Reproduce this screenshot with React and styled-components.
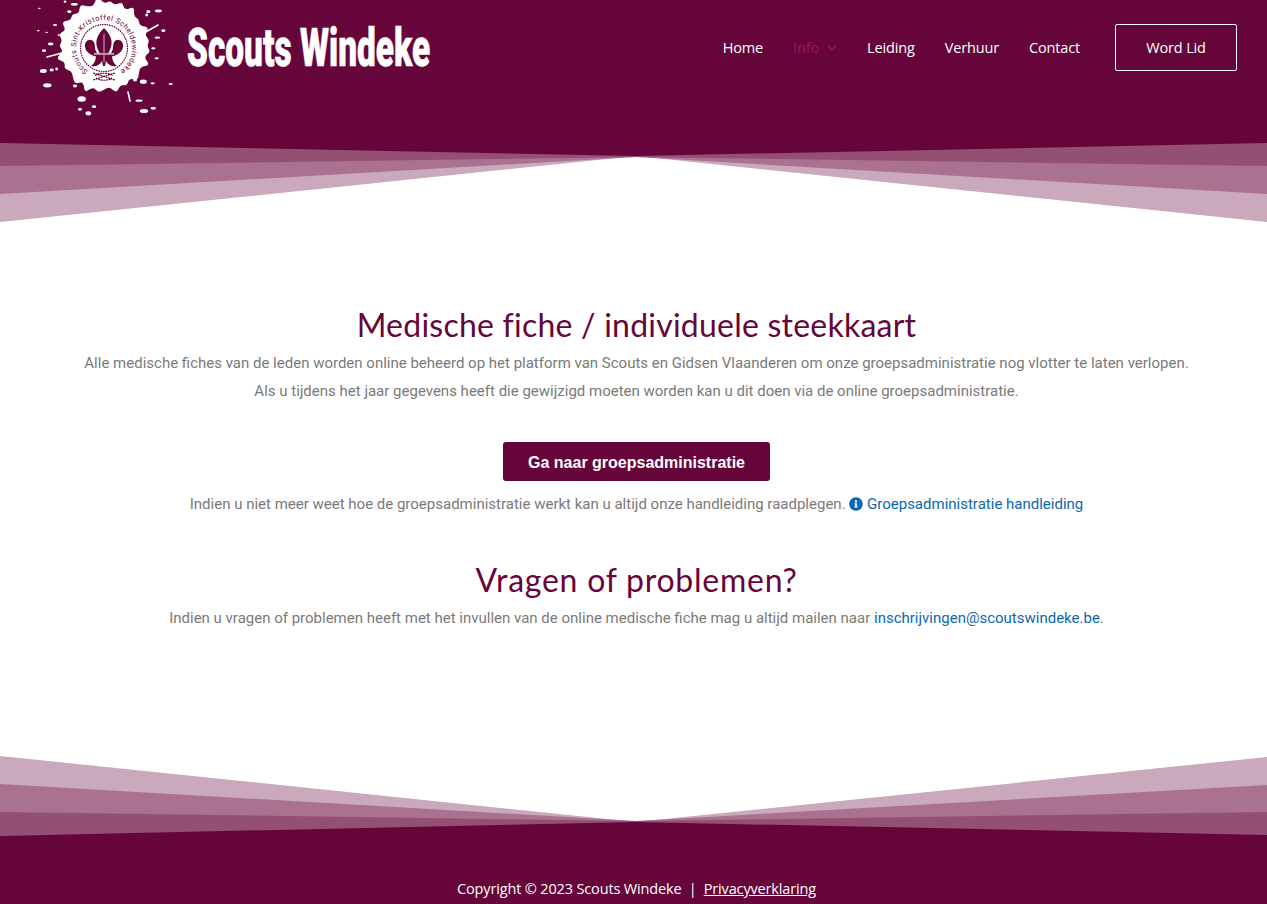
import React from "react";
import styled, { createGlobalStyle } from "styled-components";
import { FaInfoCircle } from "react-icons/fa";

const DARK = "#660539";

const Global = createGlobalStyle`
  html, body { margin: 0; padding: 0; background: #fff; }
  body { font-family: Roboto, "Liberation Sans", sans-serif; }
  * { box-sizing: border-box; }
`;

const Page = styled.div`
  width: 100%;
  height: 904px;
  display: flex;
  flex-direction: column;
  overflow: hidden;
`;

const Header = styled.header`
  height: 143px;
  flex: none;
  background: ${DARK};
  display: flex;
  align-items: flex-start;
  padding: 0 30px 0 36px;
`;

const LogoSvg = styled.svg`
  width: 140px;
  height: 120px;
  flex: none;
  display: block;
`;

const Title = styled.div`
  width: 243px;
  margin: 17px 0 0 11px;
  flex: none;
  color: #fff;
  font-family: Roboto, sans-serif;
  font-weight: 900;
  font-size: 54px;
  line-height: 62px;
  white-space: nowrap;
  transform: scaleX(0.619);
  transform-origin: left center;
  -webkit-text-stroke: 0.6px #fff;
`;

const Nav = styled.nav`
  margin-left: auto;
  margin-top: 24px;
  display: flex;
  align-items: center;
  height: 47px;
  gap: 30px;
`;

const NavLink = styled.a`
  font-family: "Open Sans", sans-serif;
  font-size: 14.5px;
  letter-spacing: -0.15px;
  color: ${(p) => (p.$active ? "#a3125f" : "#fff")};
  display: flex;
  align-items: center;
  gap: 8px;
  white-space: nowrap;
`;

const Cta = styled.a`
  width: 122px;
  height: 47px;
  margin-left: 5px;
  border: 1px solid #fff;
  border-radius: 2px;
  color: #fff;
  font-family: "Open Sans", sans-serif;
  font-size: 14.5px;
  letter-spacing: -0.15px;
  display: flex;
  align-items: center;
  justify-content: center;
`;

const Band = styled.svg`
  display: block;
  flex: none;
  width: 100%;
  height: 80px;
`;

const Main = styled.main`
  height: 533px;
  flex: none;
  padding: 82px 0 0 6px;
  text-align: center;
`;

const Heading = styled.h2`
  margin: ${(p) => (p.$second ? "42px" : "0")} 0 4px;
  font-family: Lato, sans-serif;
  font-weight: 400;
  font-size: 32px;
  line-height: 40px;
  color: ${DARK};
  letter-spacing: ${(p) => (p.$second ? "0.75px" : "0.23px")};
`;

const Text = styled.p`
  margin: 0;
  font-size: 15px;
  line-height: 28px;
  color: #7a7a7a;
`;

const Link = styled.a`
  color: #0b68b0;
`;

const Info = styled(FaInfoCircle)`
  color: #0b68b0;
  width: 14px;
  height: 14px;
  vertical-align: -1.5px;
`;

const Button = styled.a`
  display: block;
  width: 267px;
  height: 39px;
  margin: 37px auto 9px;
  background: ${DARK};
  border-radius: 3px;
  color: #fff;
  font-family: "Liberation Sans", Arial, sans-serif;
  font-weight: 700;
  font-size: 16px;
  line-height: 41px;
`;

const Footer = styled.footer`
  flex: 1;
  background: ${DARK};
  padding: 43px 0 0 6px;
  text-align: center;
  color: #fff;
  font-family: "Open Sans", sans-serif;
  font-size: 14.5px;
  letter-spacing: -0.15px;
  line-height: 20px;
`;

const FooterLink = styled.a`
  color: #fff;
  text-decoration: underline;
`;

const radii = [45,49,43,52,44,46,50,43,48,44,51,43,46,49,44,53,43,50,46,43,48,44,52,43,47,44,49,43,51,44,47,43,50,45,43,53,44,48,44,50,43,52,44,46,43,51,44,48];
const blob = (() => {
  const pts = radii.map((r, i) => {
    const a = (i / radii.length) * Math.PI * 2;
    return [68 + Math.cos(a) * (r - 2), 46 + Math.sin(a) * (r - 2)];
  });
  const mid = (a, b) => [(a[0] + b[0]) / 2, (a[1] + b[1]) / 2];
  const f = (p) => `${p[0].toFixed(1)} ${p[1].toFixed(1)}`;
  let d = `M${f(mid(pts[pts.length - 1], pts[0]))}`;
  pts.forEach((p, i) => {
    d += `Q${f(p)} ${f(mid(p, pts[(i + 1) % pts.length]))}`;
  });
  return d + "Z";
})();

const splats = [
  [163,13,5,2],[135,5,2,1.5],[415,33,5,2],[385,35,3,2],[430,92,3,2],[412,113,4,1.5],[400,145,3,1.5],
  [410,175,3,1.5],[72,152,3,2],[92,132,4,2],[105,75,3,1.5],[120,105,4,1.2],[70,213,5,3],[95,210,3,2],
  [110,207,2,2],[82,256,6,3],[165,258,3,2],[185,297,6,4],[222,320,3,2],[180,328,3,2],[205,340,4,3],
  [357,302,5,1.5],[372,333,6,3],[400,325,4,2],[370,245,5,3],[398,250,3,1.5],[452,252,3,1.5],
  [345,240,3,2],[55,92,2,1],[80,97,2,1],[58,25,2,1],[148,35,3,2],[380,45,2,2],
];

const Logo = () => (
  <LogoSvg viewBox="0 0 140 120" aria-label="Scouts Windeke logo">
    <path d={blob} fill="#fff" />
    {splats.map(([x, y, rx, ry], i) => (
      <ellipse key={i} cx={x / 3 - 16} cy={y / 3} rx={rx * 0.7} ry={ry * 0.7} fill="#fff" />
    ))}
    <path d="M108 33L122 25M11 57L26 53M92 92L94 101" stroke="#fff" strokeWidth="1.6" strokeLinecap="round" />
    <circle cx="68" cy="48" r="23.5" fill="none" stroke={DARK} strokeWidth="1.2" strokeDasharray="1.6 0.8" />
    <defs>
      <path id="logoArc" d="M 52 71 A 28 28 0 1 1 84 71" />
    </defs>
    <text fontFamily="Roboto, sans-serif" fontSize="7.4" fill={DARK}>
      <textPath href="#logoArc" textLength="141" lengthAdjust="spacing">
        Scouts Sint-Kristoffel Scheldewindeke
      </textPath>
    </text>
    <g fill={DARK}>
      <path d="M68 28C62 34 59 40 61 47C62 51 64 53 65 56L71 56C72 53 74 51 75 47C77 40 74 34 68 28Z" />
      <path d="M65 57C59 57 50 54 49 47C48 41 54 38 57 41C60 44 58 48 60 51C61 54 63 55 65 55Z" />
      <path d="M65 57C59 57 50 54 49 47C48 41 54 38 57 41C60 44 58 48 60 51C61 54 63 55 65 55Z" transform="matrix(-1 0 0 1 136 0)" />
      <path d="M60 56H76C76 60 78 64 81 66C76 67 72 65 70 61L69 66H67L66 61C64 65 60 67 55 66C58 64 60 60 60 56Z" />
    </g>
    <rect x="58" y="53" width="20" height="1.8" fill="#c9a2b8" />
    <rect x="67.3" y="34" width="1.4" height="28" fill="#b7839f" />
    <path d="M57 73L79 80M79 73L57 80M59 75.5C63 72.5 73 72.5 77 75.5M60 78C64 81 72 81 76 78" stroke={DARK} strokeWidth="1.2" fill="none" strokeDasharray="2 .6" />
  </LogoSvg>
);

const TopBand = () => (
  <Band viewBox="0 0 1267 80" preserveAspectRatio="none">
    <polygon points="0,0 1267,0 1267,79 636,13 0,79" fill="#caa9bc" />
    <polygon points="0,0 1267,0 1267,51 636,14 0,51" fill="#aa7290" />
    <polygon points="0,0 1267,0 1267,23 636,14 0,23" fill="#945074" />
    <polygon points="0,0 1267,0 636,13" fill={DARK} />
  </Band>
);

const BottomBand = () => (
  <Band viewBox="0 0 1267 80" preserveAspectRatio="none">
    <polygon points="0,0 636,66 1267,1 1267,80 0,80" fill="#caa9bc" />
    <polygon points="0,28 636,65 1267,29 1267,80 0,80" fill="#aa7290" />
    <polygon points="0,56 636,65 1267,56 1267,80 0,80" fill="#945074" />
    <polygon points="0,80 636,66 1267,79 1267,80" fill={DARK} />
  </Band>
);

export default function App() {
  return (
    <Page>
      <Global />
      <Header>
        <Logo />
        <Title>Scouts Windeke</Title>
        <Nav>
          <NavLink>Home</NavLink>
          <NavLink $active>
            Info
            <svg width="10" height="6" viewBox="0 0 10 6" fill="none" stroke="#a3125f" strokeWidth="1.3">
              <path d="M1 1l4 4 4-4" />
            </svg>
          </NavLink>
          <NavLink>Leiding</NavLink>
          <NavLink>Verhuur</NavLink>
          <NavLink>Contact</NavLink>
          <Cta>Word Lid</Cta>
        </Nav>
      </Header>
      <TopBand />
      <Main>
        <Heading>Medische fiche / individuele steekkaart</Heading>
        <Text>Alle medische fiches van de leden worden online beheerd op het platform van Scouts en Gidsen Vlaanderen om onze groepsadministratie nog vlotter te laten verlopen.</Text>
        <Text>Als u tijdens het jaar gegevens heeft die gewijzigd moeten worden kan u dit doen via de online groepsadministratie.</Text>
        <Button>Ga naar groepsadministratie</Button>
        <Text>
          Indien u niet meer weet hoe de groepsadministratie werkt kan u altijd onze handleiding raadplegen. <Info /> <Link>Groepsadministratie handleiding</Link>
        </Text>
        <Heading $second>Vragen of problemen?</Heading>
        <Text>
          Indien u vragen of problemen heeft met het invullen van de online medische fiche mag u altijd mailen naar <Link>inschrijvingen@scoutswindeke.be</Link>.
        </Text>
      </Main>
      <BottomBand />
      <Footer>
        Copyright © 2023 Scouts Windeke&nbsp; |&nbsp; <FooterLink>Privacyverklaring</FooterLink>
      </Footer>
    </Page>
  );
}
